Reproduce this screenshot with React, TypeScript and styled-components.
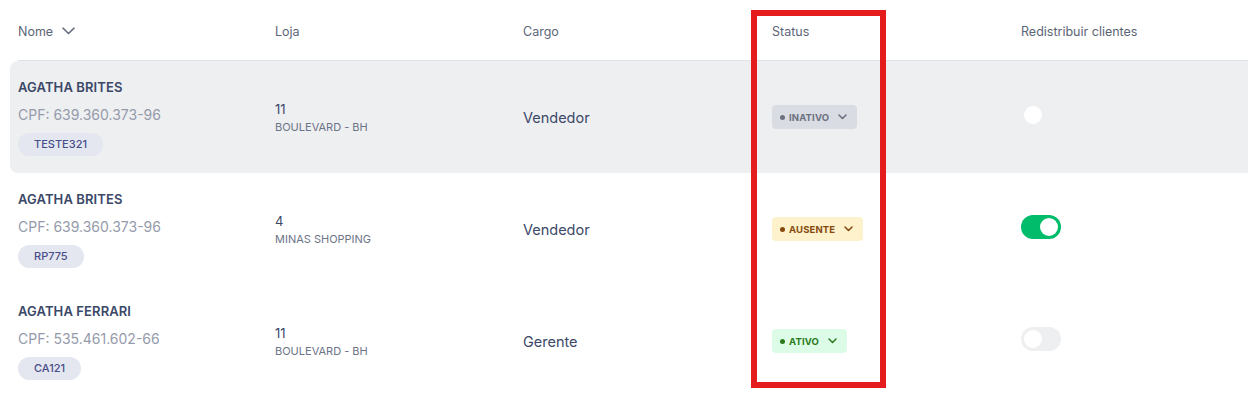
import { createGlobalStyle, styled } from "styled-components"

const GlobalStyle = createGlobalStyle`
  html, body {
    margin: 0;
    padding: 0;
    background: #ffffff;
    font-family: "Inter", "Noto Sans", sans-serif;
  }
`

const Page = styled.div`
  position: relative;
  width: 1248px;
  height: 409px;
  overflow: hidden;
  background: #fff;
`

const Table = styled.div`
  display: flex;
  flex-direction: column;
  padding-left: 10px;
`

const cols = "257px 248px 249px 249px 1fr"

const HeaderRow = styled.div`
  display: grid;
  grid-template-columns: ${cols};
  height: 60px;
  align-items: center;
  margin-left: 8px;
  border-bottom: 1px solid #dfe2e8;
`

const HeaderCell = styled.div`
  display: flex;
  align-items: center;
  gap: 9px;
  font-size: 12.5px;
  color: #5c6577;
  padding-top: 2px;
  margin-left: -8px;
  padding-left: 8px;
  &:first-child {
    margin-left: 0;
    padding-left: 0;
  }
`

const Row = styled.div<{ $active?: boolean }>`
  display: grid;
  grid-template-columns: ${cols};
  height: 112px;
  align-items: center;
  background: ${(p) => (p.$active ? "#eeeff1" : "transparent")};
  border-radius: 8px 0 0 8px;
`

const Cell = styled.div`
  padding-left: 8px;
  display: flex;
  flex-direction: column;
`

const Name = styled.div`
  font-size: 13px;
  line-height: 16px;
  font-weight: 600;
  color: #3b4868;
  letter-spacing: 0.1px;
`

const Cpf = styled.div`
  font-size: 14px;
  line-height: 17px;
  color: #959bab;
  margin-top: 11px;
`

const Tag = styled.span`
  align-self: flex-start;
  margin-top: 10px;
  height: 23px;
  line-height: 23px;
  padding: 0 16px;
  border-radius: 12px;
  background: #e4e6f0;
  color: #484e8a;
  font-size: 11px;
  font-weight: 500;
`

const StoreNumber = styled.div`
  font-size: 13px;
  line-height: 16px;
  color: #3b4868;
`

const StoreName = styled.div`
  font-size: 11px;
  line-height: 13px;
  color: #6d7487;
  margin-top: 4px;
`

const Role = styled.div`
  font-size: 14.5px;
  color: #3b4868;
`

const badgeColors = {
  inativo: { bg: "#d9dce3", fg: "#6b7080" },
  ausente: { bg: "#fdf2cc", fg: "#854a0e" },
  ativo: { bg: "#dcfce7", fg: "#2d7a1c" },
}

type Kind = keyof typeof badgeColors

const Badge = styled.div<{ $kind: Kind }>`
  align-self: flex-start;
  display: flex;
  align-items: center;
  height: 24px;
  padding: 0 10px 0 8px;
  border-radius: 4px;
  background: ${(p) => badgeColors[p.$kind].bg};
  color: ${(p) => badgeColors[p.$kind].fg};
  font-size: 9.5px;
  font-weight: 700;
  letter-spacing: 0.15px;
  gap: 4px;
`

const Dot = styled.span`
  width: 5px;
  height: 5px;
  border-radius: 50%;
  background: currentColor;
`

const BadgeChevron = styled.svg`
  margin-left: 5px;
`

const Toggle = styled.div<{ $on?: boolean; $track: string }>`
  position: relative;
  width: 40px;
  height: 24px;
  margin-bottom: 4px;
  border-radius: 12px;
  background: ${(p) => p.$track};
  &::after {
    content: "";
    position: absolute;
    top: 3px;
    left: ${(p) => (p.$on ? "19px" : "3px")};
    width: 18px;
    height: 18px;
    border-radius: 50%;
    background: #fff;
  }
`

const Highlight = styled.div`
  position: absolute;
  left: 751px;
  top: 10px;
  width: 135px;
  height: 378px;
  box-sizing: border-box;
  border: 6px solid #e41c1e;
  pointer-events: none;
`

const rows = [
  {
    name: "AGATHA BRITES",
    cpf: "CPF: 639.360.373-96",
    tag: "TESTE321",
    store: "11",
    storeName: "BOULEVARD - BH",
    role: "Vendedor",
    status: "inativo" as Kind,
    label: "INATIVO",
    on: false,
    track: "#eeeff1",
    active: true,
  },
  {
    name: "AGATHA BRITES",
    cpf: "CPF: 639.360.373-96",
    tag: "RP775",
    store: "4",
    storeName: "MINAS SHOPPING",
    role: "Vendedor",
    status: "ausente" as Kind,
    label: "AUSENTE",
    on: true,
    track: "#00bc6b",
    active: false,
  },
  {
    name: "AGATHA FERRARI",
    cpf: "CPF: 535.461.602-66",
    tag: "CA121",
    store: "11",
    storeName: "BOULEVARD - BH",
    role: "Gerente",
    status: "ativo" as Kind,
    label: "ATIVO",
    on: false,
    track: "#eeeff1",
    active: false,
  },
]

export default function App() {
  return (
    <Page>
      <GlobalStyle />
      <Table>
        <HeaderRow>
          <HeaderCell>
            Nome
            <svg width="13" height="8" viewBox="0 0 13 8" fill="none">
              <path d="M1 1.2l5.5 5.3L12 1.2" stroke="#6a7282" strokeWidth="1.6" strokeLinecap="round" strokeLinejoin="round" />
            </svg>
          </HeaderCell>
          <HeaderCell>Loja</HeaderCell>
          <HeaderCell>Cargo</HeaderCell>
          <HeaderCell>Status</HeaderCell>
          <HeaderCell>Redistribuir clientes</HeaderCell>
        </HeaderRow>
        {rows.map((r, i) => (
          <Row key={i} $active={r.active}>
            <Cell>
              <Name>{r.name}</Name>
              <Cpf>{r.cpf}</Cpf>
              <Tag>{r.tag}</Tag>
            </Cell>
            <Cell>
              <StoreNumber>{r.store}</StoreNumber>
              <StoreName>{r.storeName}</StoreName>
            </Cell>
            <Cell>
              <Role>{r.role}</Role>
            </Cell>
            <Cell>
              <Badge $kind={r.status}>
                <Dot />
                {r.label}
                <BadgeChevron width="9" height="6" viewBox="0 0 9 6" fill="none">
                  <path d="M1 1l3.5 3.5L8 1" stroke="currentColor" strokeWidth="1.5" strokeLinecap="round" strokeLinejoin="round" />
                </BadgeChevron>
              </Badge>
            </Cell>
            <Cell>
              <Toggle $on={r.on} $track={r.track} />
            </Cell>
          </Row>
        ))}
      </Table>
      <Highlight />
    </Page>
  )
}
